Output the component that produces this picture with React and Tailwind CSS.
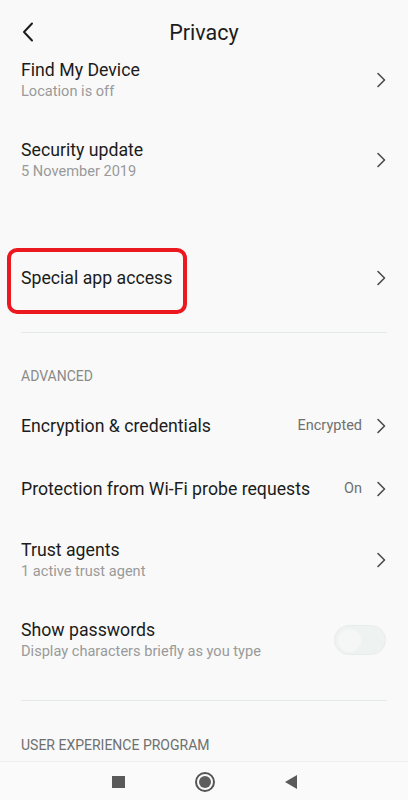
import React from 'react';

const Chevron = () => (
  <svg width="10" height="16" viewBox="0 0 10 16" fill="none" className="shrink-0">
    <path d="M2 1.5 L8.5 8 L2 14.5" stroke="#4a4a4a" strokeWidth="1.6" strokeLinecap="round" strokeLinejoin="round" />
  </svg>
);

const Row = ({ title, subtitle, value, height, right }) => (
  <div className={`flex items-center justify-between pl-[21px] pr-[22px] ${height}`}>
    <div className="flex flex-col">
      <span className="text-[17.7px] leading-[22px] text-[#1c1c1c]">{title}</span>
      {subtitle && <span className="text-[14.6px] leading-[20px] text-[#9a9a9a]">{subtitle}</span>}
    </div>
    {right || (
      <div className="flex items-center gap-[14px]">
        {value && <span className="text-[14.5px] text-[#707070]">{value}</span>}
        <Chevron />
      </div>
    )}
  </div>
);

export default function App() {
  return (
    <div className="h-screen flex flex-col bg-[#f8f9f8] font-['Roboto',sans-serif] overflow-hidden">
      <div className="flex-1 overflow-hidden">
        {/* Header */}
        <div className="relative h-[48px] flex justify-center pt-[19px]">
          <svg width="12" height="20" viewBox="0 0 12 20" fill="none" className="absolute left-[22px] top-[22px]">
            <path d="M10 1.5 L2 10 L10 18.5" stroke="#1c1c1c" strokeWidth="2" strokeLinecap="round" strokeLinejoin="round" />
          </svg>
          <span className="text-[21.5px] leading-[28px] text-[#1c1c1c]">Privacy</span>
        </div>

        <Row title="Find My Device" subtitle="Location is off" height="h-[64px]" />
        <Row title="Security update" subtitle="5 November 2019" height="h-[96px]" />
        <div className="h-[40px]" />

        <div className="relative">
          <Row title="Special app access" height="h-[60px]" />
          <div className="absolute left-[7px] top-0 w-[180px] h-[66px] border-[4px] border-[#ec1820] rounded-[10px]" />
        </div>

        <div className="mt-[24px] mx-[21px] h-px bg-[#e4eae8]" />

        <div className="pl-[21px] pt-[33px] pb-[10px] text-[14px] leading-[20px] text-[#8a8a8a]">ADVANCED</div>

        <Row title="Encryption & credentials" value="Encrypted" height="h-[60px]" />
        <Row title="Protection from Wi-Fi probe requests" value="On" height="h-[66px]" />
        <Row title="Trust agents" subtitle="1 active trust agent" height="h-[76px]" />
        <Row
          title="Show passwords"
          subtitle="Display characters briefly as you type"
          height="h-[84px]"
          right={
            <div className="w-[52px] h-[30px] rounded-full bg-[#eef2f0] border border-[#e8edeb] flex items-center px-[3px]">
              <div className="w-[23px] h-[23px] rounded-full bg-[#f5f7f6]" />
            </div>
          }
        />

        <div className="mt-[18px] mx-[21px] h-px bg-[#e4eae8]" />

        <div className="pl-[21px] pt-[34px] text-[14px] leading-[20px] text-[#6f6f6f]">USER EXPERIENCE PROGRAM</div>
      </div>

      {/* Nav bar */}
      <div className="h-[39px] shrink-0 border-t border-[#ebefed] bg-[#f9faf9] flex items-center justify-center gap-[70px] pt-[2px]">
        <div className="w-[13px] h-[12px] bg-[#5a5a5a]" />
        <div className="w-[20px] h-[20px] rounded-full border-[2px] border-[#555] flex items-center justify-center">
          <div className="w-[12px] h-[12px] rounded-full bg-[#5e5e5e]" />
        </div>
        <svg width="12" height="14" viewBox="0 0 12 14">
          <path d="M12 0 L12 14 L0 7 Z" fill="#5a5a5a" />
        </svg>
      </div>
    </div>
  );
}
